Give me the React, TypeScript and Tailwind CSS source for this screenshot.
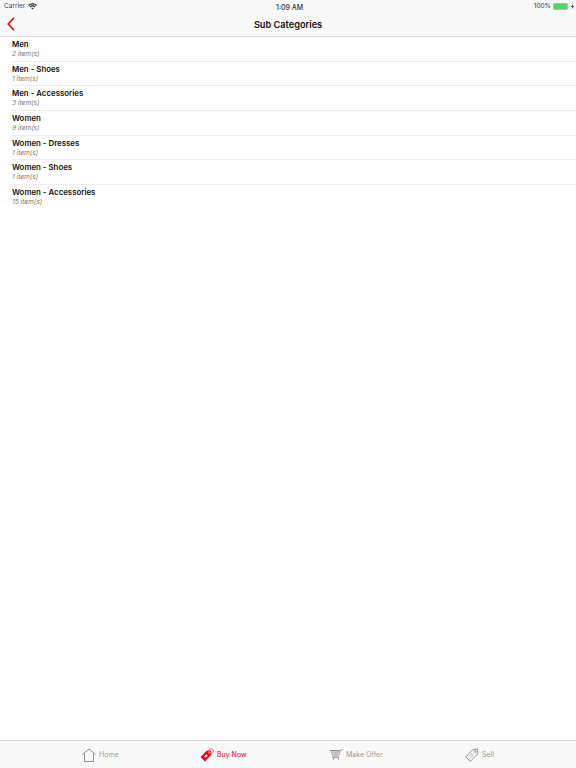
import React from 'react';

const font = { fontFamily: 'Inter' };

const rows = [
  { name: 'Men', count: '2 item(s)' },
  { name: 'Men - Shoes', count: '1 item(s)' },
  { name: 'Men - Accessories', count: '3 item(s)' },
  { name: 'Women', count: '9 item(s)' },
  { name: 'Women - Dresses', count: '1 item(s)' },
  { name: 'Women - Shoes', count: '1 item(s)' },
  { name: 'Women - Accessories', count: '15 item(s)' },
];

const HomeIcon = () => (
  <svg width="14" height="14" viewBox="0 0 14 14" fill="none" stroke="#8e8e8e" strokeWidth="1">
    <path d="M0.5 6.5 L7 1 L13.5 6.5 M2.5 5.5 V13.5 H11.5 V5.5" />
  </svg>
);

const BuyIcon = () => (
  <svg width="14" height="14" viewBox="0 0 14 14">
    <path d="M0.5 9 L7 2.5 L11 2.5 L11.5 6.5 L5 13.5 Z" fill="#f00010" />
    <circle cx="9.5" cy="4.5" r="1" fill="#fff" />
    <circle cx="11" cy="3" r="2.3" fill="none" stroke="#f05060" strokeWidth="0.8" />
    <rect x="4.5" y="7" width="3" height="2" fill="#fff" transform="rotate(-45 6 8)" />
  </svg>
);

const CartIcon = () => (
  <svg width="13" height="11" viewBox="0 0 13 11" fill="none" stroke="#8e8e8e">
    <path d="M0 1.5 H10.5 L12.5 0.5" strokeWidth="1" />
    <path d="M1 3 H10.5 M1.5 5 H10 M2 7 H9.5" strokeWidth="1.1" />
    <path d="M2.5 8.5 H9" strokeWidth="0.8" />
    <circle cx="3.5" cy="10" r="0.8" fill="#8e8e8e" stroke="none" />
    <circle cx="8.5" cy="10" r="0.8" fill="#8e8e8e" stroke="none" />
  </svg>
);

const TagIcon = () => (
  <svg width="14" height="14" viewBox="0 0 14 14" fill="none" stroke="#8e8e8e" strokeWidth="1">
    <path d="M0.7 8.8 L8 1.5 L12.5 1 L12.8 5.8 L5.3 13.3 Z" />
    <circle cx="10.3" cy="3.6" r="0.9" />
    <path d="M4 8.5 L7.5 5 M5.5 10 L9 6.5" strokeWidth="0.7" />
  </svg>
);

function StatusBar() {
  return (
    <div className="relative flex h-3 items-center justify-between bg-[#f8f8f8] pl-1 pr-[2px] text-[6.5px] text-[#333]">
      <div className="flex items-center gap-[3px]">
        <span className="pt-px text-[#444]">Carrier</span>
        <svg width="9" height="7" viewBox="0 0 18 14" fill="none" stroke="#222" strokeWidth="2.4">
          <path d="M1 5 A11.5 11.5 0 0 1 17 5" />
          <path d="M4 8 A7.5 7.5 0 0 1 14 8" />
          <path d="M6.5 10.5 A3.6 3.6 0 0 1 11.5 10.5 L9 13 Z" fill="#222" stroke="none" />
        </svg>
      </div>
      <span className="absolute left-[276px] top-[2px] pt-px text-[7px] font-medium leading-[9px]">1:09 AM</span>
      <div className="flex items-center gap-[2px]">
        <span className="pt-px">100%</span>
        <div className="h-[7px] w-[15px] rounded-[1.5px] border border-[#b5b5b5] bg-[#4cd964]" />
        <svg width="3" height="5" viewBox="0 0 3 5" className="ml-[1px]">
          <path d="M2 0 L0 3 H1.2 L1 5 L3 2 H1.8 Z" fill="#333" />
        </svg>
      </div>
    </div>
  );
}

function Tab({ icon, label, active, className }: { icon: React.ReactNode; label: string; active?: boolean; className: string }) {
  return (
    <div className={`flex items-center ${className}`}>
      {icon}
      <span className={`pt-px text-[7px] ${active ? 'text-[#f00010]' : 'text-[#999]'}`}>{label}</span>
    </div>
  );
}

export default function App() {
  return (
    <div style={font} className="flex h-[768px] w-[576px] flex-col overflow-hidden bg-white text-black antialiased">
      <StatusBar />
      <header className="relative flex h-[25px] items-center justify-center border-b border-[#d8d8d8] bg-[#f8f8f8]">
        <svg width="8" height="14" viewBox="0 0 8 14" fill="none" stroke="#f00000" strokeWidth="1.6" className="absolute left-[7px] top-[5px]">
          <path d="M7 0.7 L1.2 7 L7 13.3" />
        </svg>
        <h1 className="pt-px text-[9.2px] font-semibold text-[#111]">Sub Categories</h1>
      </header>
      <ul className="flex-1">
        {rows.map((r) => (
          <li key={r.name} className="ml-3 h-[24.67px] border-b border-[#ececec] pt-[2px] last:border-0">
            <div className="text-[7.85px] font-semibold leading-[11px] text-[#111]">{r.name}</div>
            <div className="mt-px text-[6.6px] italic leading-[7px] text-[#777]">{r.count}</div>
          </li>
        ))}
      </ul>
      <nav className="flex h-[28px] items-center border-t border-[#dcdcdc] bg-[#f8f8f8] pl-[82px]">
        <Tab icon={<HomeIcon />} label="Home" className="w-[118px] gap-[3px]" />
        <Tab icon={<BuyIcon />} label="Buy Now" active className="w-[130px] gap-[3px]" />
        <Tab icon={<CartIcon />} label="Make Offer" className="w-[135px] gap-[3px]" />
        <Tab icon={<TagIcon />} label="Sell" className="gap-[3px]" />
      </nav>
    </div>
  );
}
